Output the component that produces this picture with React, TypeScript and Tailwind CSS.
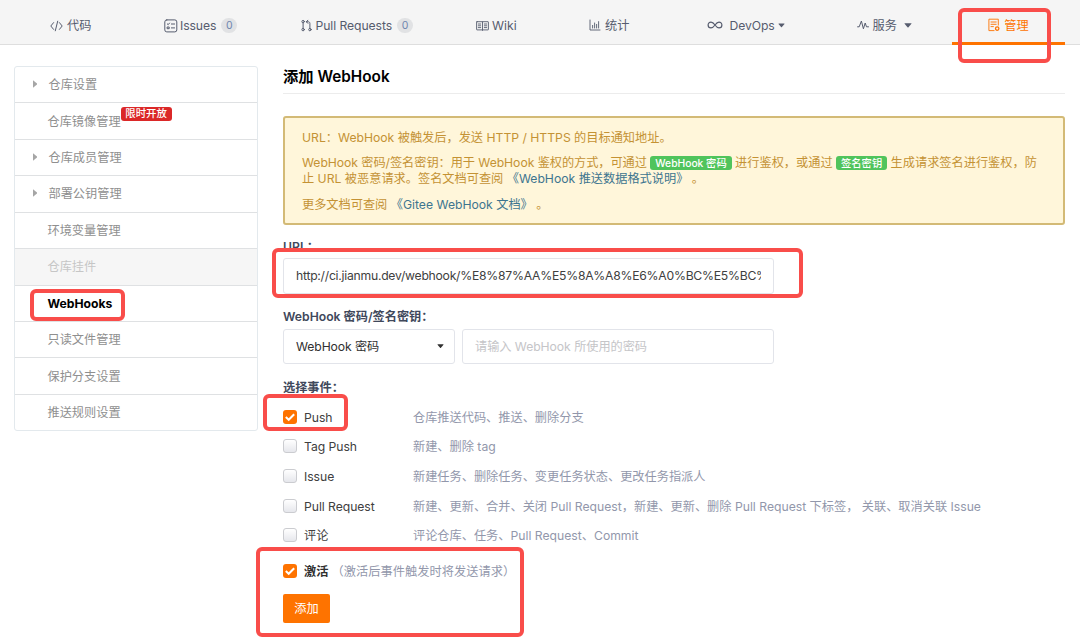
import type { ReactNode } from "react";

const stroke = {
  fill: "none",
  stroke: "currentColor",
  strokeLinecap: "round" as const,
  strokeLinejoin: "round" as const,
};

function CodeIcon() {
  return (
    <svg className="h-[12px] w-[13px]" viewBox="0 0 13 12" strokeWidth="1" {...stroke}>
      <path d="M3.6 2.6 0.8 6l2.8 3.4M9.4 2.6 12.2 6 9.4 9.4M7.7 1.2 5.3 10.8" />
    </svg>
  );
}

function IssuesIcon() {
  return (
    <svg className="h-[14px] w-[14px]" viewBox="0 0 14 14" strokeWidth="1" {...stroke}>
      <rect x="0.8" y="0.9" width="12" height="12" rx="2" />
      <path d="M3.3 4.9l.9.8 1.3-1.6M7.4 5h3.2M7.4 8.9h3.2" />
      <rect x="3.5" y="8" width="1.7" height="1.7" />
    </svg>
  );
}

function PullIcon() {
  return (
    <svg className="-mt-px h-[13px] w-[11px]" viewBox="0 0 11 13" strokeWidth="1" {...stroke}>
      <circle cx="2.1" cy="2.6" r="1.2" />
      <circle cx="2.1" cy="10.6" r="1.2" />
      <circle cx="8.9" cy="10.6" r="1.2" />
      <path d="M2.1 3.9v5.4M8.9 9.3V4.4c0-1-.6-1.6-1.6-1.6H5.4M6.9 1.2 5.3 2.8l1.6 1.6" />
    </svg>
  );
}

function WikiIcon() {
  return (
    <svg className="h-[10px] w-[13px]" viewBox="0 0 13 10" strokeWidth="0.9" {...stroke}>
      <rect x="0.6" y="0.7" width="11.8" height="8.2" rx="0.4" />
      <path d="M6.5 1v8.4M2.3 3h2.4M2.3 4.8h2.4M2.3 6.6h2.4M8.3 3h2.4M8.3 4.8h2.4M8.3 6.6h2.4" />
    </svg>
  );
}

function ChartIcon() {
  return (
    <svg className="-mt-px h-[12px] w-[12px]" viewBox="0 0 12 12" strokeWidth="0.9" {...stroke}>
      <path d="M1 1v10h10M3.6 9V6.4M5.6 9V4M7.6 9V5.4M9.6 9V2.6" />
    </svg>
  );
}

function InfinityIcon() {
  return (
    <svg className="-mt-px h-[10px] w-[16px]" viewBox="0 0 16 10" strokeWidth="1.2" {...stroke}>
      <path d="M8 5C6.6 3 5.6 2.1 4 2.1a2.9 2.9 0 0 0 0 5.8C5.6 7.9 6.6 7 8 5s2.4-2.9 4-2.9a2.9 2.9 0 0 1 0 5.8C10.4 7.9 9.4 7 8 5Z" />
    </svg>
  );
}

function PulseIcon() {
  return (
    <svg className="-mt-px h-[12px] w-[12px]" viewBox="0 0 12 12" strokeWidth="1" {...stroke}>
      <path d="M.6 7.8h1.6L4.4 2l2 7.8L8.2 4l1.3 3.8h2" />
    </svg>
  );
}

function ManageIcon() {
  return (
    <svg className="-mt-[2px] h-[14px] w-[12px]" viewBox="0 0 12 14" strokeWidth="0.9" {...stroke}>
      <path d="M10.3 7.2V1.2H.9v11.4h5.2M3 4h5.2M3 6.3h5.2M3 8.6h2.4" />
      <circle cx="9.2" cy="10.6" r="1.7" strokeWidth="1.3" />
    </svg>
  );
}

function Caret({ className }: { className: string }) {
  return (
    <svg className={className} viewBox="0 0 8 5" fill="currentColor">
      <path d="M.8.3h6.4q.6 0 .2.5L4.5 4.3q-.5.5-1 0L.6.8Q.2.3.8.3Z" />
    </svg>
  );
}

function Count() {
  return (
    <span className="flex h-[15px] w-[16px] items-center justify-center rounded-full bg-[#e1e2e4] text-[10.5px] text-[#6f86b0]">
      0
    </span>
  );
}

function NavItem({ className, children }: { className: string; children: ReactNode }) {
  return <a className={`flex shrink-0 items-center whitespace-nowrap pt-[7px] ${className}`}>{children}</a>;
}

const menu = [
  { label: "仓库设置", arrow: true },
  { label: "仓库镜像管理", badge: "限时开放" },
  { label: "仓库成员管理", arrow: true },
  { label: "部署公钥管理", arrow: true },
  { label: "环境变量管理" },
  { label: "仓库挂件", disabled: true },
  { label: "WebHooks", active: true },
  { label: "只读文件管理" },
  { label: "保护分支设置" },
  { label: "推送规则设置" },
];

function Sidebar() {
  return (
    <aside className="mt-[21px] h-[365px] w-[244px] shrink-0 overflow-hidden rounded-[3px] border border-[#e3e9ed]">
      {menu.map((m, i) => (
        <div
          key={m.label}
          className={`flex items-center pt-px ${i > 0 ? "h-[36.45px] border-t border-[#dfe1e3]" : "h-[35.4px]"} ${
            m.disabled ? "bg-[#f6f6f6] text-[#c6c6c6]" : m.active ? "font-bold text-black" : "text-[#8f8f8f]"
          }`}
        >
          <span className={m.arrow ? "w-[33.5px] pl-[17.5px]" : "w-[32.5px]"}>
            {m.arrow && (
              <svg className="-mt-[3px] h-[8px] w-[4.5px]" viewBox="0 0 4.5 8" fill="#a6a6a6">
                <path d="M0 .2v7.6L4.5 4Z" />
              </svg>
            )}
          </span>
          <span className={m.active ? "tracking-[-0.02px]" : ""}>{m.label}</span>
          {m.badge && (
            <span className="-mt-[16px] flex h-[14px] w-[51px] items-center justify-center rounded-[3px] bg-[#db2828] text-[10.4px] font-medium text-white">
              {m.badge}
            </span>
          )}
        </div>
      ))}
    </aside>
  );
}

function Check({ checked }: { checked?: boolean }) {
  return checked ? (
    <span className="-mt-[2px] flex h-[14px] w-[14px] shrink-0 items-center justify-center rounded-[3px] bg-[#fe7300] text-white">
      <svg className="h-[10px] w-[10px]" viewBox="0 0 10 10" fill="none" stroke="currentColor" strokeWidth="2">
        <path d="M.8 5.1 3.7 7.8 9.2 2.3" />
      </svg>
    </span>
  ) : (
    <span className="-mt-[2px] h-[14px] w-[14px] shrink-0 rounded-[3px] border border-[#cbccd0] bg-linear-to-b from-white to-[#e6e7ec]" />
  );
}

const events = [
  { name: "Push", desc: "仓库推送代码、推送、删除分支", checked: true },
  { name: "Tag Push", desc: "新建、删除 tag" },
  { name: "Issue", desc: "新建任务、删除任务、变更任务状态、更改任务指派人" },
  { name: "Pull Request", desc: "新建、更新、合并、关闭 Pull Request，新建、更新、删除 Pull Request 下标签， 关联、取消关联 Issue" },
  { name: "评论", desc: "评论仓库、任务、Pull Request、Commit" },
];

function Tag({ children }: { children: ReactNode }) {
  return (
    <span className="mx-[3.4px] inline-block h-[14px] rounded-[3px] bg-[#50c45c] px-[5px] align-[0.5px] text-[10.3px] leading-[14px] font-medium text-white">
      {children}
    </span>
  );
}

function Frame({ className }: { className: string }) {
  return <div className={`pointer-events-none absolute rounded-[6px] border-4 border-[#f94d4a] ${className}`} />;
}

export default function App() {
  return (
    <div className="relative h-[644px] w-[1080px] overflow-hidden bg-white font-['Inter','Noto_Sans_CJK_SC',sans-serif] text-[12.2px] leading-[16px] text-[#404040]">
      <nav className="flex h-[45px] border-b border-[#dedede] bg-[#f5f5f5] pl-[50px] text-[#565c6e]">
        <NavItem className="w-[114px] gap-[4px]"><CodeIcon />代码</NavItem>
        <NavItem className="w-[137px] gap-[2px]"><IssuesIcon /><span className="mr-[3px] tracking-[-0.1px]">Issues</span><Count /></NavItem>
        <NavItem className="w-[175px] gap-[3.5px]"><PullIcon /><span className="mr-[1.5px] tracking-[-0.08px]">Pull Requests</span><Count /></NavItem>
        <NavItem className="w-[113px] gap-[3px]"><WikiIcon />Wiki</NavItem>
        <NavItem className="w-[118px] gap-[4px]"><ChartIcon />统计</NavItem>
        <NavItem className="w-[150px]"><InfinityIcon /><span className="ml-[6.5px] tracking-[-0.1px]">DevOps</span><Caret className="ml-[3px] h-[5px] w-[7px]" /></NavItem>
        <NavItem className="w-[95px]"><PulseIcon /><span className="ml-[3.5px]">服务</span><Caret className="ml-[7px] h-[5px] w-[8px]" /></NavItem>
        <NavItem className="h-[45px] w-[113px] justify-center gap-[4px] border-b-[3px] border-[#fe7300] pt-[9px] text-[#fe7300]"><ManageIcon />管理</NavItem>
      </nav>

      <div className="flex pl-[14px]">
        <Sidebar />
        <main className="ml-[25px] w-[782px]">
          <h1 className="h-[49px] border-b border-[#ececec] pt-[21px] text-[15.3px] leading-[21px] font-semibold text-black">添加 WebHook</h1>

          <section className="mt-[22px] h-[109px] rounded-[3px] border-2 border-[#d3ba76] bg-[#fff6da] pt-[12px] pl-[17px] text-[#c49234]">
            <p className="whitespace-nowrap">URL：WebHook 被触发后，发送 HTTP / HTTPS 的目标通知地址。</p>
            <p className="mt-[9px] whitespace-nowrap">
              <span className="tracking-[-0.05px]">WebHook 密码/签名密钥：用于 WebHook 鉴权的方式，可通过</span><Tag>WebHook 密码</Tag>进行鉴权，或通过<Tag>签名密钥</Tag>生成请求签名进行鉴权，防
              <br />止 URL 被恶意请求。签名文档可查阅 <a className="text-[#3d758f]">《WebHook 推送数据格式说明》</a> 。
            </p>
            <p className="mt-[10px] whitespace-nowrap">
              更多文档可查阅 <a className="text-[#3d758f]">《Gitee WebHook 文档》</a> 。
            </p>
          </section>

          <div className="mt-[14px] font-semibold text-[#40485b]">URL：</div>
          <div className="mt-[3px] flex h-[36px] w-[491px] items-center rounded-[3px] border border-[#e2e4ea] px-[12px]">
            <span className="w-full overflow-hidden whitespace-nowrap tracking-[-0.25px]">http://ci.jianmu.dev/webhook/%E8%87%AA%E5%8A%A8%E6%A0%BC%E5%BC%8F</span>
          </div>

          <div className="mt-[15px] font-semibold text-[#40485b]">WebHook 密码/签名密钥：</div>
          <div className="mt-[4px] flex gap-[7px]">
            <div className="flex h-[35px] w-[172px] items-center justify-between rounded-[3px] border border-[#e2e4ea] pr-[10px] pl-[12px] text-[#303030]">
              <span className="tracking-[-0.1px]">WebHook 密码</span>
              <Caret className="h-[4.5px] w-[7px]" />
            </div>
            <div className="flex h-[35px] w-[312px] items-center rounded-[3px] border border-[#e2e4ea] px-[12px] tracking-[-0.05px] text-[#c5c5c8]">
              请输入 WebHook 所使用的密码
            </div>
          </div>

          <div className="mt-[16px] font-semibold text-[#40485b]">选择事件：</div>
          <div className="mt-[7px]">
            {events.map((e) => (
              <div key={e.name} className="flex h-[29.6px] items-center whitespace-nowrap">
                <Check checked={e.checked} />
                <span className="ml-[7px] w-[109px] tracking-[-0.05px]">{e.name}</span>
                <span className="text-[#9297ab]">{e.desc}</span>
              </div>
            ))}
          </div>

          <div className="mt-[6px] flex h-[30px] items-center whitespace-nowrap">
            <Check checked />
            <span className="ml-[7px] font-bold text-[#303030]">激活</span>
            <span className="ml-[3px] tracking-[0.07px] text-[#9297ab]">（激活后事件触发时将发送请求）</span>
          </div>
          <button className="mt-[7px] flex h-[29px] w-[47px] items-center justify-center rounded-[2px] bg-[#fe7300] pt-px text-white">添加</button>
        </main>
      </div>

      <Frame className="top-[8px] left-[958px] h-[55px] w-[93px]" />
      <Frame className="top-[289px] left-[30px] h-[32px] w-[95px]" />
      <Frame className="top-[248px] left-[272px] h-[50px] w-[531px]" />
      <Frame className="top-[394px] left-[263px] h-[37px] w-[85px]" />
      <Frame className="top-[547px] left-[256px] h-[90px] w-[268px]" />
    </div>
  );
}
